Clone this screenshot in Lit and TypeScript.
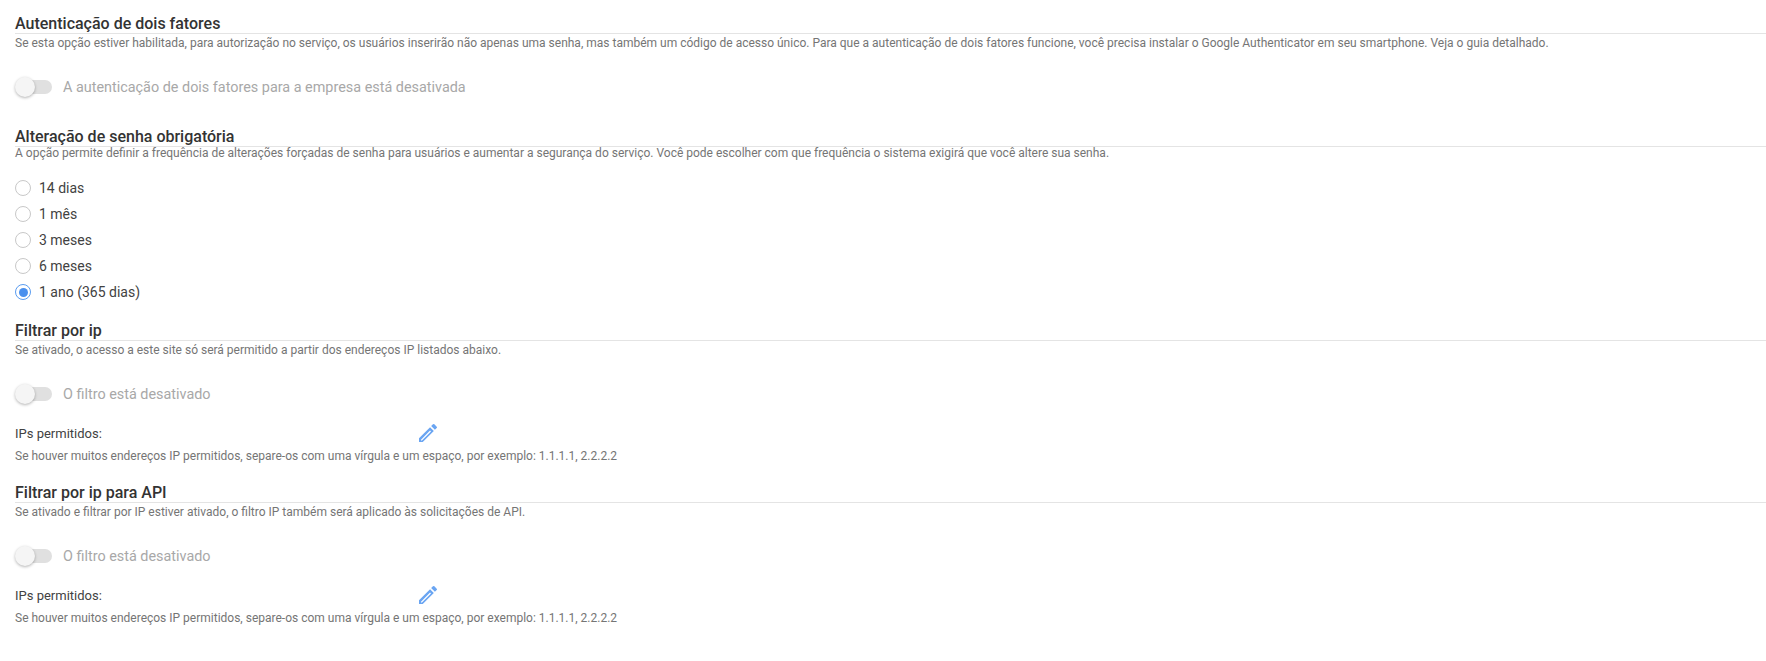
import { LitElement, html, css, svg } from 'lit';
import { customElement, property } from 'lit/decorators.js';

const RADIOS = ['14 dias', '1 mês', '3 meses', '6 meses', '1 ano (365 dias)'];
const IP_HINT =
  'Se houver muitos endereços IP permitidos, separe-os com uma vírgula e um espaço, por exemplo: 1.1.1.1, 2.2.2.2';

const pencil = svg`<path d="M3 17.25V21h3.75L17.81 9.94l-3.75-3.75L3 17.25zm2.92 2.33H5v-.92l9.06-9.06.92.92L5.92 19.58zM20.71 7.04a1 1 0 0 0 0-1.41l-2.34-2.34a1 1 0 0 0-1.41 0l-1.83 1.83 3.75 3.75 1.83-1.83z"/>`;

@customElement('off-toggle')
export class OffToggle extends LitElement {
  static styles = css`
    :host {
      display: flex;
      align-items: center;
      gap: 11px;
      height: 26px;
    }
    .track {
      position: relative;
      width: 36px;
      height: 14px;
      margin-left: 1px;
      border-radius: 7px;
      background: #e0e0e0;
    }
    .knob {
      position: absolute;
      left: -1px;
      top: -3px;
      width: 20px;
      height: 20px;
      border-radius: 50%;
      background: #f5f5f5;
      box-shadow: 0 1px 3px rgba(0, 0, 0, 0.3);
    }
    span {
      font-size: 14.4px;
      color: #a8a8a8;
    }
  `;

  @property({ type: String })
  label = '';

  render() {
    return html`<div class="track"><div class="knob"></div></div>
      <span>${this.label}</span>`;
  }
}

@customElement('app-root')
export class AppRoot extends LitElement {
  static styles = css`
    :host {
      display: block;
      font-family: Roboto, sans-serif;
      color: #424242;
      background: #fff;
      height: 661px;
      overflow: hidden;
      padding: 14px 0 0 15px;
      box-sizing: border-box;
    }
    h2 {
      margin: 0;
      font-size: 16px;
      line-height: 19px;
      font-weight: 500;
      color: #333;
      border-bottom: 1px solid #e4e4e4;
    }
    .desc {
      margin: 0;
      font-size: 12px;
      line-height: 18px;
      color: #757575;
    }
    .desc.tight {
      margin-top: -3px;
    }
    off-toggle {
      margin-top: 22px;
    }
    .first {
      margin-bottom: 27px;
    }
    .radios {
      display: flex;
      flex-direction: column;
      margin: 13px 0 16px;
    }
    .radio {
      display: flex;
      align-items: center;
      gap: 8px;
      height: 26px;
      font-size: 14px;
    }
    .dot {
      box-sizing: border-box;
      width: 16px;
      height: 16px;
      border: 1px solid #c8c8c8;
      border-radius: 50%;
      display: flex;
      align-items: center;
      justify-content: center;
    }
    .dot.on {
      border-color: #5a9cf0;
      border-width: 1.5px;
    }
    .dot.on::after {
      content: '';
      width: 9px;
      height: 9px;
      border-radius: 50%;
      background: #4a90ee;
    }
    .ips {
      display: flex;
      align-items: center;
      margin-top: 13px;
      height: 26px;
    }
    .ips span {
      width: 401px;
      font-size: 13px;
      color: #424242;
    }
    .ips svg {
      width: 24px;
      height: 24px;
      fill: #6aa5f2;
    }
    .hint {
      margin: 1px 0 18px;
    }
  `;

  private _ipBlock() {
    return html`<div class="ips">
        <span>IPs permitidos:</span>
        <svg viewBox="0 0 24 24">${pencil}</svg>
      </div>
      <p class="desc hint">${IP_HINT}</p>`;
  }

  render() {
    return html`
      <h2>Autenticação de dois fatores</h2>
      <p class="desc">
        Se esta opção estiver habilitada, para autorização no serviço, os usuários inserirão não apenas uma senha, mas também um código de acesso único. Para que a autenticação de dois fatores funcione, você precisa instalar o Google Authenticator em seu smartphone. Veja o guia detalhado.
      </p>
      <off-toggle class="first" label="A autenticação de dois fatores para a empresa está desativada"></off-toggle>

      <h2>Alteração de senha obrigatória</h2>
      <p class="desc tight">
        A opção permite definir a frequência de alterações forçadas de senha para usuários e aumentar a segurança do serviço. Você pode escolher com que frequência o sistema exigirá que você altere sua senha.
      </p>
      <div class="radios">
        ${RADIOS.map(
          (r, i) => html`<div class="radio">
            <div class="dot ${i === 4 ? 'on' : ''}"></div>
            ${r}
          </div>`
        )}
      </div>

      <h2>Filtrar por ip</h2>
      <p class="desc">Se ativado, o acesso a este site só será permitido a partir dos endereços IP listados abaixo.</p>
      <off-toggle label="O filtro está desativado"></off-toggle>
      ${this._ipBlock()}

      <h2>Filtrar por ip para API</h2>
      <p class="desc">Se ativado e filtrar por IP estiver ativado, o filtro IP também será aplicado às solicitações de API.</p>
      <off-toggle label="O filtro está desativado"></off-toggle>
      ${this._ipBlock()}
    `;
  }
}
